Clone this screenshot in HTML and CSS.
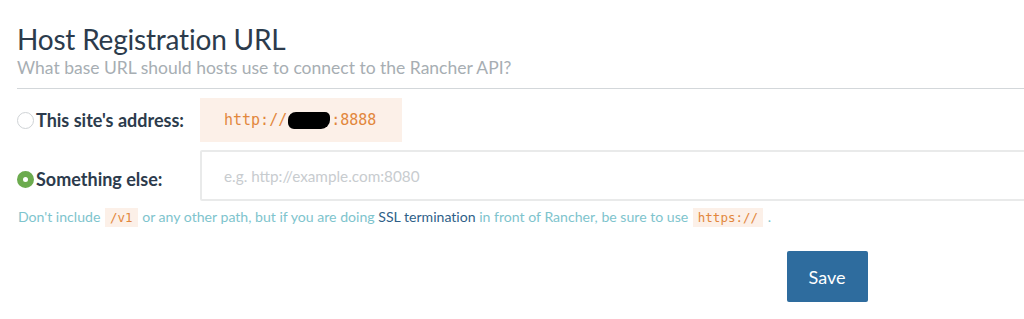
FILE: index.html
```html
<!DOCTYPE html>
<html lang="en">
<head>
  <meta charset="UTF-8">
  <title>Host Registration URL</title>
  <link rel="stylesheet" href="styles.css">
</head>
<body>
  <div class="settings">
    <h2 class="title">Host Registration URL</h2>
    <p class="subtitle">What base URL should hosts use to connect to the Rancher API?</p>
    <hr>

    <div class="option-row">
      <label class="option">
        <span class="radio"></span>
        This site's address:
      </label>
      <div class="address">
        <code>http://<span class="redact"></span>:8888</code>
      </div>
    </div>

    <div class="option-row">
      <label class="option option-else">
        <span class="radio checked"></span>
        Something else:
      </label>
      <input type="text" class="url-input" placeholder="e.g. http://example.com:8080">
    </div>

    <p class="help-text">Don't include <code>/v1</code> or any other path, but if you are doing <a href="#">SSL termination</a> in front of Rancher, be sure to use <code>https://</code> .</p>

    <div class="footer">
      <button id="save">Save</button>
    </div>
  </div>
</body>
</html>
```

FILE: styles.css
```css
html, body {
  overflow: hidden;
}

body {
  font-family: Lato, "Open Sans", sans-serif;
  font-variant-ligatures: none;
  background: #ffffff;
  margin: 0;
}

.settings {
  width: 1620px;
  padding-left: 17px;
}

.title {
  font-size: 28px;
  font-weight: normal;
  letter-spacing: -0.2px;
  color: #2c3b4c;
  margin: 22px 0 0;
  line-height: 34px;
}

.subtitle {
  font-size: 17.5px;
  color: #a7aeb3;
  margin: 0;
  line-height: 24px;
}

hr {
  border: 0;
  border-top: 1px solid #d3d7da;
  margin: 8px 0 0;
}

.option-row {
  display: flex;
  align-items: center;
  margin-top: 8px;
}

.option-row:first-of-type {
  margin-top: 9px;
}

.option {
  width: 183px;
  flex-shrink: 0;
  display: flex;
  align-items: center;
  gap: 2px;
  font-size: 18px;
  font-weight: bold;
  color: #2c3b4c;
}

.option-else {
  margin-top: 7px;
}

.radio {
  width: 17px;
  height: 17px;
  border-radius: 50%;
  border: 1px solid #cfd3d6;
  box-sizing: border-box;
  background: #fff;
}

.radio.checked {
  border: 6px solid #6cab4e;
  background: #fff;
}

.address {
  width: 202px;
  height: 44px;
  background: #fcf0e8;
  display: flex;
  align-items: center;
  padding-left: 24px;
  box-sizing: border-box;
}

.address code {
  font-family: "DejaVu Sans Mono", monospace;
  font-size: 15px;
  color: #e2873c;
  display: flex;
  align-items: center;
}

.redact {
  display: inline-block;
  width: 42px;
  height: 17px;
  background: #000;
  border-radius: 8px 5px 9px 6px;
  margin: 0 1px;
}

.url-input {
  flex: 1;
  height: 51px;
  border: 2px solid #e9eaea;
  border-radius: 2px;
  padding: 0 22px;
  font-family: Lato, sans-serif;
  font-size: 15.3px;
  box-sizing: border-box;
  outline: none;
}

.url-input::placeholder {
  color: #c8cccf;
}

.help-text {
  font-size: 14.1px;
  color: #7ec4cd;
  margin: 6px 0 0 1px;
  line-height: 20px;
}

.help-text a {
  color: #2f5f88;
  text-decoration: none;
}

.help-text code {
  font-family: "DejaVu Sans Mono", monospace;
  font-size: 12.5px;
  color: #e2873c;
  background: #fcf0e8;
  padding: 2px 5px;
  margin: 0 1px;
}

.footer {
  display: flex;
  justify-content: center;
  margin-top: 23px;
}

#save {
  width: 81px;
  height: 51px;
  background-color: #2e6c9e;
  color: white;
  border: none;
  border-radius: 2px;
  font-family: Lato, sans-serif;
  font-size: 18px;
  cursor: pointer;
}
```
